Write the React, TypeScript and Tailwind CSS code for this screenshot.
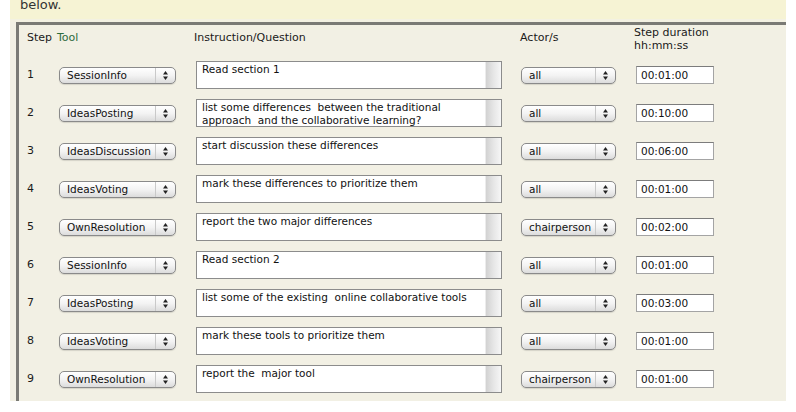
import React from "react";

type Step = {
    tool: string;
    text: string;
    actor: string;
    duration: string;
};

const steps: Step[] = [
    { tool: "SessionInfo", text: "Read section 1", actor: "all", duration: "00:01:00" },
    {
        tool: "IdeasPosting",
        text: "list some differences  between the traditional\napproach  and the collaborative learning?",
        actor: "all",
        duration: "00:10:00",
    },
    { tool: "IdeasDiscussion", text: "start discussion these differences", actor: "all", duration: "00:06:00" },
    { tool: "IdeasVoting", text: "mark these differences to prioritize them", actor: "all", duration: "00:01:00" },
    { tool: "OwnResolution", text: "report the two major differences", actor: "chairperson", duration: "00:02:00" },
    { tool: "SessionInfo", text: "Read section 2", actor: "all", duration: "00:01:00" },
    { tool: "IdeasPosting", text: "list some of the existing  online collaborative tools", actor: "all", duration: "00:03:00" },
    { tool: "IdeasVoting", text: "mark these tools to prioritize them", actor: "all", duration: "00:01:00" },
    { tool: "OwnResolution", text: "report the  major tool", actor: "chairperson", duration: "00:01:00" },
];

const Arrows = () => (
    <svg width="5" height="9" viewBox="0 0 5 9">
        <polygon points="2.5,0 5,3.5 0,3.5" fill="#222" />
        <polygon points="0,5.5 5,5.5 2.5,9" fill="#222" />
    </svg>
);

// aqua style popup button
const Popup = ({ value, width }: { value: string; width: string }) => {
    return (
        <div
            className={`${width} h-[17px] flex rounded-[5px] border border-[#8a8a8a] bg-gradient-to-b from-white via-[#f3f3f3] to-[#dcdcdc] shadow-[0_1px_1px_rgba(0,0,0,0.12)]`}
        >
            <div className="flex-1 pl-[7px] text-[10.5px] leading-[15px] text-[#111] whitespace-nowrap overflow-hidden">
                {value}
            </div>
            <div className="w-[20px] border-l border-[#c9c9c9] flex items-center justify-center">
                <Arrows />
            </div>
        </div>
    );
};

const TextBox = ({ text }: { text: string }) => {
    return (
        <div className="w-[306px] h-[28px] flex border border-[#8c8c8c] bg-white">
            <div className="flex-1 pl-[5px] pt-[1px] text-[10.5px] leading-[13px] text-[#111] whitespace-pre-wrap overflow-hidden">
                {text}
            </div>
            <div className="w-[16px] border-l border-[#ececec] bg-gradient-to-r from-[#d2d2d2] via-[#e6e6e6] to-[#f6f6f6]" />
        </div>
    );
};

const App = () => {
    return (
        <main className="w-[796px] h-[412px] bg-white overflow-hidden font-['DejaVu_Sans',sans-serif] text-[#1a1a1a]">
            <div className="ml-[10px] w-[776px] bg-[#f2f0e4]">
                <div className="h-[19px] bg-[#f6f3d4] pl-[10px] overflow-hidden">
                    <div className="-mt-[2px] text-[13px] leading-[13px] text-[#333]">below.</div>
                </div>
                <div className="h-[3px] bg-[#f3f1e2]" />
                <div className="ml-[6px] h-[379px] border-l-[3px] border-t-[3px] border-[#7a7a75] pl-[8px] text-[11px]">
                    <div className="grid grid-cols-[32px_137px_325px_115px_1fr] h-[31px] leading-[13px]">
                        <div className="mt-[6px]">Step</div>
                        <div className="mt-[6px] -ml-[2px] text-[#2e6b3c]">Tool</div>
                        <div className="mt-[6px] -ml-[2px]">Instruction/Question</div>
                        <div className="mt-[6px] -ml-[1px]">Actor/s</div>
                        <div className="-ml-[2px] mt-[1px]">
                            <div>Step duration</div>
                            <div>hh:mm:ss</div>
                        </div>
                    </div>
                    {steps.map((s, i) => (
                        <div
                            key={i}
                            className="grid grid-cols-[32px_137px_325px_115px_1fr] h-[38px] items-center"
                        >
                            <div>{i + 1}</div>
                            <Popup value={s.tool} width="w-[117px]" />
                            <TextBox text={s.text} />
                            <Popup value={s.actor} width="w-[95px]" />
                            <div className="w-[78px] h-[18px] border border-[#a4a4a4] border-t-[#7c7c7c] bg-white pl-[4px] text-[10.5px] leading-[16px] text-[#111]">
                                {s.duration}
                            </div>
                        </div>
                    ))}
                </div>
            </div>
        </main>
    );
};

export default App;
